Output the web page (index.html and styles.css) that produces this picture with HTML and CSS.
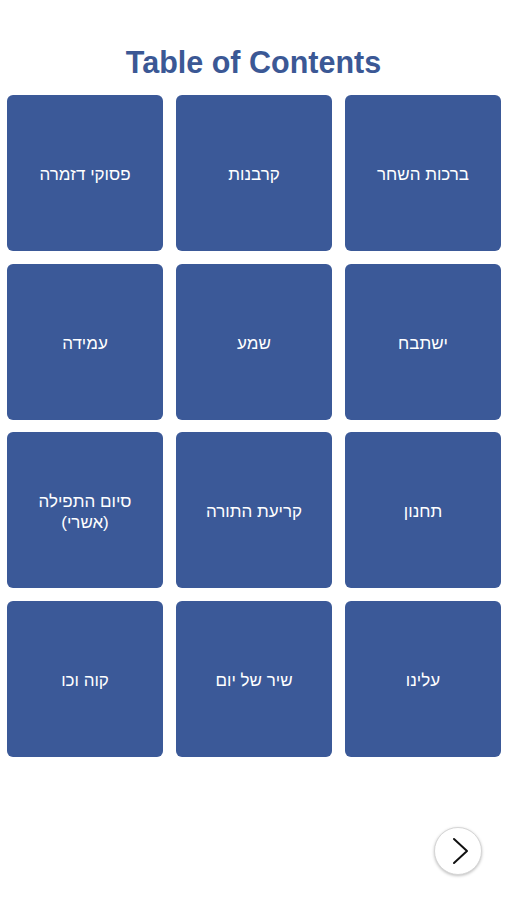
FILE: index.html
```html
<!DOCTYPE html>
<html lang="en">
<head>
<meta charset="utf-8">
<link rel="stylesheet" href="styles.css">
</head>
<body>
<main class="page">
  <h1 class="title">Table of Contents</h1>
  <div class="grid" dir="rtl">
    <a class="tile">ברכות השחר</a>
    <a class="tile">קרבנות</a>
    <a class="tile">פסוקי דזמרה</a>
    <a class="tile">ישתבח</a>
    <a class="tile">שמע</a>
    <a class="tile">עמידה</a>
    <a class="tile">תחנון</a>
    <a class="tile">קריעת התורה</a>
    <a class="tile">סיום התפילה<br>(אשרי)</a>
    <a class="tile">עלינו</a>
    <a class="tile">שיר של יום</a>
    <a class="tile">קוה וכו</a>
  </div>
  <div class="footer">
    <button class="next" aria-label="Next">
      <svg width="20" height="28" viewBox="0 0 20 28"><path d="M4 2 L17 14 L4 26" fill="none" stroke="#111" stroke-width="2" stroke-linecap="round" stroke-linejoin="round"/></svg>
    </button>
  </div>
</main>
</body>
</html>
```

FILE: styles.css
```css
html, body {
  margin: 0;
  padding: 0;
  background: #ffffff;
}
.page {
  width: 507px;
  height: 900px;
  display: flex;
  flex-direction: column;
  font-family: "Liberation Sans", Arial, "Noto Sans", sans-serif;
}
.title {
  margin: 44px 0 0 0;
  height: 51px;
  text-align: center;
  font-size: 30.5px;
  line-height: 36px;
  font-weight: bold;
  color: #3b5895;
}
.grid {
  margin-left: 7px;
  width: 494px;
  display: grid;
  grid-template-columns: repeat(3, 156px);
  grid-auto-rows: 156px;
  gap: 12.5px 13px;
}
.tile {
  background: #3b5998;
  border-radius: 6px;
  color: #ffffff;
  display: flex;
  align-items: center;
  justify-content: center;
  text-align: center;
  font-family: "Liberation Sans", "DejaVu Sans", Arial, sans-serif;
  font-size: 17px;
  line-height: 21px;
  padding-top: 3px;
  box-sizing: border-box;
}
.footer {
  display: flex;
  justify-content: flex-end;
  padding: 70px 25px 0 0;
}
.next {
  width: 48px;
  height: 48px;
  border-radius: 50%;
  border: 1px solid #d6d6d6;
  background: #ffffff;
  box-shadow: 0 1px 3px rgba(0,0,0,0.25);
  display: flex;
  align-items: center;
  justify-content: center;
  padding: 0 0 0 3px;
}
```
